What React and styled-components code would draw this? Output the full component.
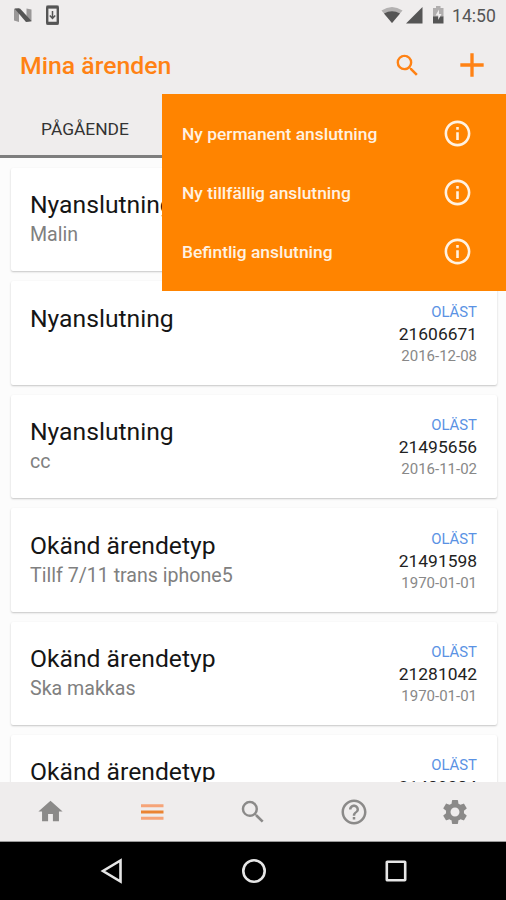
import React, { useState } from 'react';
import styled, { createGlobalStyle } from 'styled-components';
import {
  MdAdd,
  MdHelpOutline,
  MdHome,
  MdInfoOutline,
  MdSearch,
  MdSettings,
} from 'react-icons/md';

const menuItems = [
  'Ny permanent anslutning',
  'Ny tillfällig anslutning',
  'Befintlig anslutning',
];

const cases = [
  { id: 1, title: 'Nyanslutning', note: 'Malin' },
  { id: 2, title: 'Nyanslutning', note: '', number: '21606671', date: '2016-12-08' },
  { id: 3, title: 'Nyanslutning', note: 'cc', number: '21495656', date: '2016-11-02' },
  { id: 4, title: 'Okänd ärendetyp', note: 'Tillf 7/11 trans iphone5', number: '21491598', date: '1970-01-01' },
  { id: 5, title: 'Okänd ärendetyp', note: 'Ska makkas', number: '21281042', date: '1970-01-01' },
  { id: 6, title: 'Okänd ärendetyp', note: '', number: '21489084' },
];

function StatusIcons() {
  return (
    <StatusBar>
      <svg width="60" height="32" viewBox="0 0 60 32">
        <path d="M14 9l5-1v14l-5-1.5z" fill="#9a9898" />
        <path d="M26.500 8.500l5 1v12l-5 .5z" fill="#9a9898" />
        <path d="M14.500 8.500h5.500l11.500 12.500-5.500 1z" fill="#555" />
        <rect x="47.200" y="7" width="10.600" height="16.500" rx="1" fill="none" stroke="#555" strokeWidth="2.400" />
        <path d="M46.500 7h12M46.500 23.300h12" stroke="#555" strokeWidth="3" />
        <path d="M52.500 11v7M49.800 15.500l2.700 3 2.700-3" fill="none" stroke="#555" strokeWidth="1.500" />
      </svg>
      <Spacer />
      <svg width="72" height="32" viewBox="0 0 72 32">
        <path d="M1.500 10.500Q12 3.500 22.500 10.500L12 23z" fill="#b3b1b1" />
        <path d="M4 13.500Q12 9 20 13.500L12 23z" fill="#555" />
        <path d="M42.500 7v16.500H26z" fill="#555" />
        <path d="M53 8h3V6h4.500v2h3v9H53z" fill="#b0aeae" />
        <path d="M53 16.500h10.500v7H53z" fill="#555" />
        <path d="M59 9.500l-3.500 6h2.700V20l3.300-6h-2.500z" fill="#efeded" />
      </svg>
      <Clock>14:50</Clock>
    </StatusBar>
  );
}

function CaseCard({ item }) {
  return (
    <Card>
      <div>
        <CaseTitle>{item.title}</CaseTitle>
        <CaseNote>{item.note}</CaseNote>
      </div>
      {item.number && (
        <CaseMeta>
          <Unread>OLÄST</Unread>
          <CaseNumber>{item.number}</CaseNumber>
          <CaseDate>{item.date}</CaseDate>
        </CaseMeta>
      )}
    </Card>
  );
}

function App() {
  const [menuOpen, setMenuOpen] = useState(true);

  const toggleMenu = () => {
    setMenuOpen(!menuOpen);
  };

  return (
    <Screen>
      <GlobalStyle />
      <StatusIcons />
      <Toolbar>
        <Title>Mina ärenden</Title>
        <IconButton $width={62}>
          <MdSearch size={29} />
        </IconButton>
        <IconButton $width={68} onClick={toggleMenu}>
          <MdAdd size={40} />
        </IconButton>
      </Toolbar>
      <Tabs>
        <Tab>PÅGÅENDE</Tab>
      </Tabs>
      {menuOpen && (
        <Menu>
          {menuItems.map((item) => (
            <MenuItem key={item}>
              <span>{item}</span>
              <MdInfoOutline size={31} />
            </MenuItem>
          ))}
        </Menu>
      )}
      <List>
        {cases.map((item) => (
          <CaseCard key={item.id} item={item} />
        ))}
      </List>
      <BottomBar>
        <BottomItem>
          <MdHome size={29} />
        </BottomItem>
        <BottomItem>
          <svg width="24" height="18" viewBox="0 0 24 18">
            <path d="M1 2.800h22.500M1 15.200h22.500" stroke="#f6a478" strokeWidth="3" />
            <path d="M1 9h22.500" stroke="#ea8433" strokeWidth="3" />
          </svg>
        </BottomItem>
        <BottomItem>
          <MdSearch size={30} />
        </BottomItem>
        <BottomItem>
          <MdHelpOutline size={30} />
        </BottomItem>
        <BottomItem>
          <MdSettings size={30} />
        </BottomItem>
      </BottomBar>
      <SystemBar>
        <svg width="24" height="28" viewBox="0 0 24 28">
          <path d="M20.500 3.500v21L3 14z" />
        </svg>
        <svg width="28" height="28" viewBox="0 0 28 28">
          <circle cx="14" cy="14" r="10.700" />
        </svg>
        <svg width="24" height="28" viewBox="0 0 24 28">
          <rect x="2.800" y="4.800" width="18.400" height="18.400" rx="0.500" />
        </svg>
      </SystemBar>
    </Screen>
  );
}

export default App;

const GlobalStyle = createGlobalStyle`
  body {
    margin: 0;
    font-family: Roboto, sans-serif;
  }
`;

const Screen = styled.div`
  position: relative;
  width: 506px;
  height: 900px;
  overflow: hidden;
  display: flex;
  flex-direction: column;
  background-color: #fcfcfc;
`;

const StatusBar = styled.div`
  flex: none;
  display: flex;
  align-items: center;
  height: 32px;
  background-color: #efeded;
`;

const Spacer = styled.div`
  flex: 1;
`;

const Clock = styled.div`
  width: 53px;
  padding-right: 1px;
  font-size: 17.600px;
  line-height: 32px;
  color: #555;
`;

const Toolbar = styled.div`
  flex: none;
  display: flex;
  align-items: center;
  height: 66px;
  padding-left: 20px;
  box-sizing: border-box;
  background-color: #efeded;
  color: #ff8214;
`;

const Title = styled.div`
  flex: 1;
  padding-top: 1px;
  font-size: 24.800px;
  font-weight: 500;
`;

const IconButton = styled.div`
  width: ${(props) => props.$width}px;
  display: flex;
  justify-content: center;
  cursor: pointer;
`;

const Tabs = styled.div`
  flex: none;
  display: flex;
  height: 60px;
  background-color: #efeded;
`;

const Tab = styled.div`
  width: 170px;
  box-sizing: border-box;
  text-align: center;
  font-size: 17.400px;
  line-height: 62px;
  color: #333;
  border-bottom: 3px solid #7e7e7e;
`;

const Menu = styled.div`
  position: absolute;
  top: 94px;
  right: 0;
  width: 344px;
  height: 197px;
  padding: 10px 33px 10px 20px;
  box-sizing: border-box;
  background-color: #ff8400;
`;

const MenuItem = styled.div`
  display: flex;
  align-items: center;
  justify-content: space-between;
  height: 59px;
  font-size: 17.400px;
  font-weight: 500;
  color: #fff2e2;
`;

const List = styled.div`
  flex: 1;
  min-height: 0;
  overflow: hidden;
  display: flex;
  flex-direction: column;
  gap: 10px;
  padding: 10px 9px 0 11px;
`;

const Card = styled.div`
  flex: none;
  display: flex;
  justify-content: space-between;
  height: 103.400px;
  padding: 21.400px 20px 0 19px;
  box-sizing: border-box;
  background-color: #fff;
  border-radius: 2px;
  box-shadow: 0 1px 2px rgba(0, 0, 0, 0.22);
`;

const CaseTitle = styled.div`
  font-size: 24.700px;
  line-height: 32px;
  color: #151515;
`;

const CaseNote = styled.div`
  font-size: 19.600px;
  line-height: 28px;
  color: #808080;
`;

const CaseMeta = styled.div`
  text-align: right;
`;

const Unread = styled.div`
  font-size: 14.900px;
  line-height: 19px;
  color: #5a92e4;
`;

const CaseNumber = styled.div`
  font-size: 17.400px;
  line-height: 24px;
  color: #222;
`;

const CaseDate = styled.div`
  font-size: 15px;
  line-height: 20px;
  color: #888;
`;

const BottomBar = styled.div`
  flex: none;
  display: flex;
  align-items: center;
  height: 59px;
  background-color: #efeded;
  border-bottom: 1px solid #999;
`;

const BottomItem = styled.div`
  flex: 1;
  display: flex;
  justify-content: center;
  color: #8b8a89;
`;

const SystemBar = styled.div`
  flex: none;
  display: flex;
  align-items: center;
  justify-content: center;
  gap: 116px;
  height: 58px;
  padding-left: 1px;
  background-color: #000;

  svg {
    fill: none;
    stroke: #e6e6e6;
    stroke-width: 2.6;
  }
`;
